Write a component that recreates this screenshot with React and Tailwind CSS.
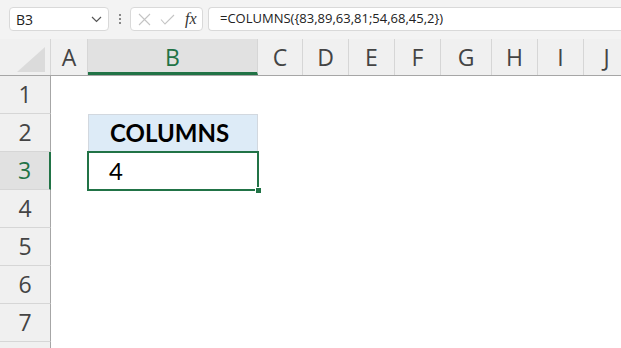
import React from "react";

const hdrFont = { fontFamily: '"Open Sans", "Noto Sans", sans-serif' };
const cellFont = { fontFamily: 'Lato, "Open Sans", sans-serif' };

const cols = [
  { l: "A", w: "w-[37px]" },
  { l: "B", w: "w-[170px]", sel: true },
  { l: "C", w: "w-[45px]" },
  { l: "D", w: "w-[46px]" },
  { l: "E", w: "w-[46px]" },
  { l: "F", w: "w-[46px]" },
  { l: "G", w: "w-[51px]" },
  { l: "H", w: "w-[46px]" },
  { l: "I", w: "w-[46px]" },
  { l: "J", w: "w-[46px]" },
];

function RowHeader({ n, sel }) {
  return (
    <div
      className={
        "w-[51px] h-[38px] shrink-0 flex items-center justify-center border-b border-[#d6d6d6] text-[23px] " +
        (sel
          ? "bg-[#e1e1e1] text-[#217346] border-r-2 border-r-[#217346]"
          : "bg-[#f0f0f0] text-[#444] border-r border-r-[#a6a6a6]")
      }
      style={hdrFont}
    >
      {n}
    </div>
  );
}

export default function App() {
  return (
    <div className="w-[621px] h-[348px] overflow-hidden bg-white flex flex-col">
      {/* toolbar */}
      <div className="h-[39px] shrink-0 bg-[#f3f3f3] flex items-start pt-[7px] pl-[9px]">
        <div className="w-[100px] h-[24px] bg-white border border-[#d9d9d9] rounded-[4px] flex items-center pl-[6px] pr-[6px]">
          <span className="text-[14px] text-[#222] flex-1" style={hdrFont}>B3</span>
          <svg width="11" height="7" viewBox="0 0 11 7">
            <path d="M1 1 L5.5 5.5 L10 1" fill="none" stroke="#555" strokeWidth="1.2" />
          </svg>
        </div>
        <div className="w-[21px] h-[24px] flex flex-col items-center justify-center gap-[2px]">
          <div className="w-[2px] h-[2px] bg-[#888]" />
          <div className="w-[2px] h-[2px] bg-[#888]" />
          <div className="w-[2px] h-[2px] bg-[#888]" />
        </div>
        <div className="w-[73px] h-[24px] bg-white border border-[#d9d9d9] rounded-[4px] flex items-center pl-[7px] gap-[9px]">
          <svg width="13" height="13" viewBox="0 0 13 13">
            <path d="M1 1 L12 12 M12 1 L1 12" stroke="#c4c4c4" strokeWidth="1.1" />
          </svg>
          <svg width="15" height="11" viewBox="0 0 15 11">
            <path d="M1 5.5 L5 10 L14 1" fill="none" stroke="#c4c4c4" strokeWidth="1.1" />
          </svg>
          <span
            className="text-[16px] italic text-[#333] leading-none ml-[1px]"
            style={{ fontFamily: '"Liberation Serif", "DejaVu Serif", serif' }}
          >
            fx
          </span>
        </div>
        <div className="ml-[5px] flex-1 h-[24px] bg-white border border-r-0 border-[#d9d9d9] rounded-l-[4px] flex items-center pl-[11px]">
          <span className="text-[13px] text-[#222] whitespace-nowrap" style={hdrFont}>
            =COLUMNS({"{"}83,89,63,81;54,68,45,2{"}"})
          </span>
        </div>
      </div>

      {/* column headers */}
      <div className="h-[37px] shrink-0 flex bg-[#f0f0f0] border-b border-[#a6a6a6]">
        <div className="w-[51px] shrink-0 border-r border-[#d6d6d6] flex items-end justify-end pr-[4px] pb-[3px]">
          <svg width="29" height="25" viewBox="0 0 29 25">
            <polygon points="28,0 28,25 0,25" fill="#dbdbdb" />
          </svg>
        </div>
        {cols.map((c) => (
          <div
            key={c.l}
            className={
              c.w +
              " shrink-0 flex items-center justify-center text-[23px] border-r border-[#d6d6d6] " +
              (c.sel
                ? "bg-[#e1e1e1] text-[#217346] border-b-[3px] border-b-[#217346] pt-[3px]"
                : "text-[#444]")
            }
            style={hdrFont}
          >
            {c.l}
          </div>
        ))}
      </div>

      {/* rows */}
      <div className="flex-1 flex flex-col">
        <div className="flex">
          <RowHeader n={1} />
        </div>
        <div className="flex">
          <RowHeader n={2} />
          <div className="w-[37px] shrink-0" />
          <div
            className="w-[170px] h-[38px] shrink-0 bg-[#ddebf7] border border-[#d2d8df] flex items-center pl-[21px] text-[24px] font-bold text-black"
            style={cellFont}
          >
            COLUMNS
          </div>
        </div>
        <div className="flex">
          <RowHeader n={3} sel />
          <div className="w-[36px] shrink-0" />
          <div className="relative w-[172px] h-[40px] -mt-[1px] shrink-0 border-2 border-[#217346] flex items-center pl-[20px] text-[24px] text-black" style={cellFont}>
            4
            <div className="absolute -right-[5px] -bottom-[5px] w-[7px] h-[7px] bg-[#217346] border border-white" />
          </div>
        </div>
        <div className="flex -mt-[1px]">
          <RowHeader n={4} />
        </div>
        <div className="flex">
          <RowHeader n={5} />
        </div>
        <div className="flex">
          <RowHeader n={6} />
        </div>
        <div className="flex">
          <RowHeader n={7} />
        </div>
        <div className="flex">
          <RowHeader n="" />
        </div>
      </div>
    </div>
  );
}
